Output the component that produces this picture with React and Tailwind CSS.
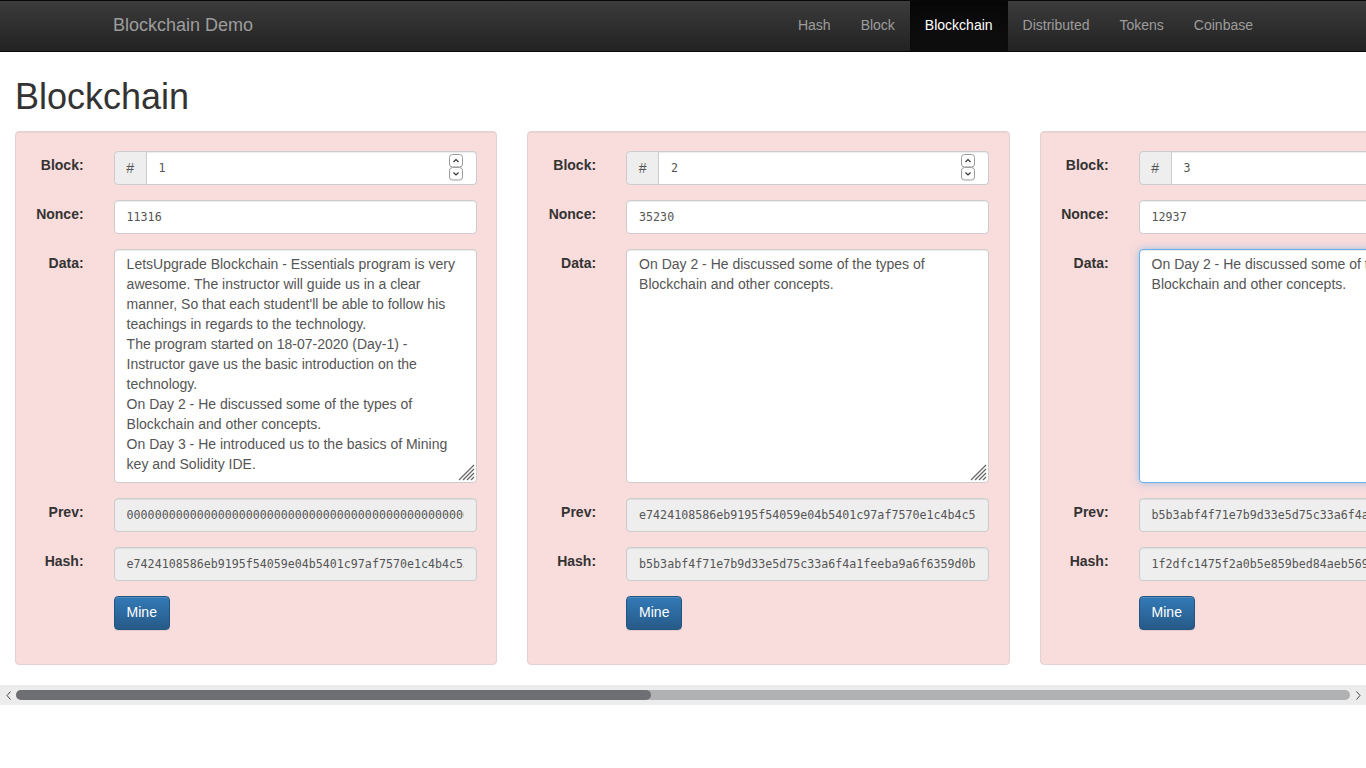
import React from 'react';

const sans = { fontFamily: '"Liberation Sans", Arial, Helvetica, sans-serif' };

const navItems = ['Hash', 'Block', 'Blockchain', 'Distributed', 'Tokens', 'Coinbase'];

const day2 = 'On Day 2 - He discussed some of the types of Blockchain and other concepts.';

const blocks = [
  {
    n: 1,
    nonce: '11316',
    data:
      "LetsUpgrade Blockchain - Essentials program is very awesome. The instructor will guide us in a clear manner, So that each student'll be able to follow his teachings in regards to the technology.\nThe program started on 18-07-2020 (Day-1) - Instructor gave us the basic introduction on the technology.\nOn Day 2 - He discussed some of the types of Blockchain and other concepts.\nOn Day 3 - He introduced us to the basics of Mining key and Solidity IDE.",
    prev: '0000000000000000000000000000000000000000000000000000000000000000',
    hash: 'e7424108586eb9195f54059e04b5401c97af7570e1c4b4c53a0f2d9e61b7c845',
  },
  {
    n: 2,
    nonce: '35230',
    data: day2,
    prev: 'e7424108586eb9195f54059e04b5401c97af7570e1c4b4c53a0f2d9e61b7c845',
    hash: 'b5b3abf4f71e7b9d33e5d75c33a6f4a1feeba9a6f6359d0b8e21c4d07a93f516',
  },
  {
    n: 3,
    nonce: '12937',
    data: day2,
    focused: true,
    prev: 'b5b3abf4f71e7b9d33e5d75c33a6f4a1feeba9a6f6359d0b8e21c4d07a93f516',
    hash: '1f2dfc1475f2a0b5e859bed84aeb5697c0d2e41a3b96f8e57d10ca4be2f38d09',
  },
  {
    n: 4,
    nonce: '40512',
    data: 'On Day 3 - He introduced us to the basics of Mining key and Solidity IDE.',
    prev: '1f2dfc1475f2a0b5e859bed84aeb5697c0d2e41a3b96f8e57d10ca4be2f38d09',
    hash: '6c0e93ab21f47d58e0b3c9a17f64d2e85b0a3c7914fe62d8a05b7c31e9f4d260',
  },
  {
    n: 5,
    nonce: '8841',
    data: '',
    prev: '6c0e93ab21f47d58e0b3c9a17f64d2e85b0a3c7914fe62d8a05b7c31e9f4d260',
    hash: '93a7d1c0e54b28f6a19c3e7d0b45f82a6e1c9d30b7f4a52e8c06d91b3a7e4f25',
  },
];

function Spinner() {
  return (
    <svg className="absolute right-[14px] top-[3px]" width="14" height="27" viewBox="0 0 14 27">
      <rect x="0.5" y="0.5" width="13" height="12.5" rx="3" fill="#fff" stroke="#9a9a9a" />
      <rect x="0.5" y="13.5" width="13" height="12.5" rx="3" fill="#fff" stroke="#9a9a9a" />
      <path d="M4.5 8 L7 5.5 L9.5 8" fill="none" stroke="#333" strokeWidth="1.2" />
      <path d="M4.5 18.5 L7 21 L9.5 18.5" fill="none" stroke="#333" strokeWidth="1.2" />
    </svg>
  );
}

function Grip() {
  return (
    <svg className="absolute right-[2px] bottom-[2px] pointer-events-none" width="17" height="17" viewBox="0 0 17 17">
      <g stroke="#666" strokeWidth="1.3">
        <line x1="16" y1="1" x2="1" y2="16" />
        <line x1="16" y1="5" x2="5" y2="16" />
        <line x1="16" y1="9" x2="9" y2="16" />
        <line x1="16" y1="13" x2="13" y2="16" />
      </g>
    </svg>
  );
}

function Row({ label, children }) {
  return (
    <div className="flex gap-[30px] mb-[15px]">
      <label className="w-[49px] shrink-0 flex justify-end whitespace-nowrap pt-[4px] leading-5 text-[14px] font-bold text-[#333]">
        {label}
      </label>
      <div className="w-[363px] shrink-0">{children}</div>
    </div>
  );
}

const inputBase =
  'block w-full h-[34px] px-[12px] rounded-[4px] border border-[#ccc] text-[11.65px] text-[#555] shadow-[inset_0_1px_1px_rgba(0,0,0,0.075)] outline-none font-["DejaVu_Sans_Mono",monospace]';

function Card({ b }) {
  return (
    <div className="w-[482.5px] shrink-0 bg-[#f9dcdc] border border-[#e4d2d2] rounded-[4px] p-[19px] shadow-[inset_0_1px_1px_rgba(0,0,0,0.05)]">
      <Row label="Block:">
        <div className="flex h-[34px]">
          <span className="w-[33px] shrink-0 flex items-center justify-center bg-[#eee] border border-[#ccc] rounded-l-[4px] text-[14px] text-[#555]">
            #
          </span>
          <div className="relative flex-1">
            <input readOnly value={b.n} className={inputBase + ' bg-white rounded-l-none border-l-0'} />
            {b.n < 3 && <Spinner />}
          </div>
        </div>
      </Row>
      <Row label="Nonce:">
        <input readOnly value={b.nonce} className={inputBase + ' bg-white'} />
      </Row>
      <Row label="Data:">
        <div className="relative">
          <textarea
            readOnly
            spellCheck={false}
            value={b.data}
            className={
              'block w-full h-[234px] px-[12px] pt-[4px] pb-[8px] rounded-[4px] border text-[14px] leading-5 text-[#555] bg-white outline-none resize-none ' +
              (b.focused
                ? 'border-[#66afe9] shadow-[inset_0_1px_1px_rgba(0,0,0,0.075),0_0_8px_rgba(102,175,233,0.6)]'
                : 'border-[#ccc] shadow-[inset_0_1px_1px_rgba(0,0,0,0.075)]')
            }
            style={sans}
          />
          <Grip />
        </div>
      </Row>
      <Row label="Prev:">
        <input readOnly value={b.prev} className={inputBase + ' bg-[#eee]'} />
      </Row>
      <Row label="Hash:">
        <input readOnly value={b.hash} className={inputBase + ' bg-[#eee]'} />
      </Row>
      <div className="flex gap-[30px] mb-[15px]">
        <div className="w-[49px] shrink-0" />
        <button className="h-[34px] px-[12px] pb-[2px] rounded-[4px] border border-[#245580] bg-gradient-to-b from-[#337ab7] to-[#265a88] text-white text-[14px] leading-5 shadow-[inset_0_1px_0_rgba(255,255,255,0.15),0_1px_1px_rgba(0,0,0,0.075)]">
          Mine
        </button>
      </div>
    </div>
  );
}

export default function App() {
  return (
    <div className="min-h-[768px] bg-white text-[14px] text-[#333]" style={sans}>
      {/* Navbar */}
      <nav className="h-[52px] border-y border-[#080808] bg-gradient-to-b from-[#3c3c3c] to-[#222]">
        <div className="w-[1170px] mx-auto flex justify-between">
          <a className="px-[15px] pt-[14px] pb-[16px] text-[18px] leading-5 text-[#9d9d9d]">Blockchain Demo</a>
          <ul className="flex">
            {navItems.map((item) => (
              <li key={item}>
                <a
                  className={`block px-[15px] pt-[14px] pb-[16px] leading-5 ${
                    item === 'Blockchain'
                      ? 'text-white bg-gradient-to-b from-[#080808] to-[#0f0f0f] shadow-[inset_0_3px_9px_rgba(0,0,0,0.25)]'
                      : 'text-[#9d9d9d]'
                  }`}
                >
                  {item}
                </a>
              </li>
            ))}
          </ul>
        </div>
      </nav>

      <h1 className="px-[15px] mt-[25px] mb-[14px] text-[36px] leading-[40px] font-medium text-[#333]">Blockchain</h1>

      {/* Chain */}
      <div className="overflow-hidden">
        <div className="flex gap-[30px] pl-[14.6px] pr-[322px] pb-[20px] w-max">
          {blocks.map((b) => (
            <Card key={b.n} b={b} />
          ))}
        </div>
      </div>

      {/* Horizontal scrollbar */}
      <div className="h-[20px] bg-[#ececec] flex items-center">
        <div className="w-[16px] h-full flex items-center justify-center">
          <svg width="5" height="9" viewBox="0 0 5 9">
            <path d="M4.5 0.5 L1 4.5 L4.5 8.5" fill="none" stroke="#444" strokeWidth="1" />
          </svg>
        </div>
        <div className="flex-1 h-[10px] rounded-full bg-[#b0b1b3] flex">
          <div className="w-[635px] h-full rounded-full bg-[#6d6f73]" />
        </div>
        <div className="w-[16px] h-full flex items-center justify-center">
          <svg width="5" height="9" viewBox="0 0 5 9">
            <path d="M0.5 0.5 L4 4.5 L0.5 8.5" fill="none" stroke="#444" strokeWidth="1" />
          </svg>
        </div>
      </div>
    </div>
  );
}
